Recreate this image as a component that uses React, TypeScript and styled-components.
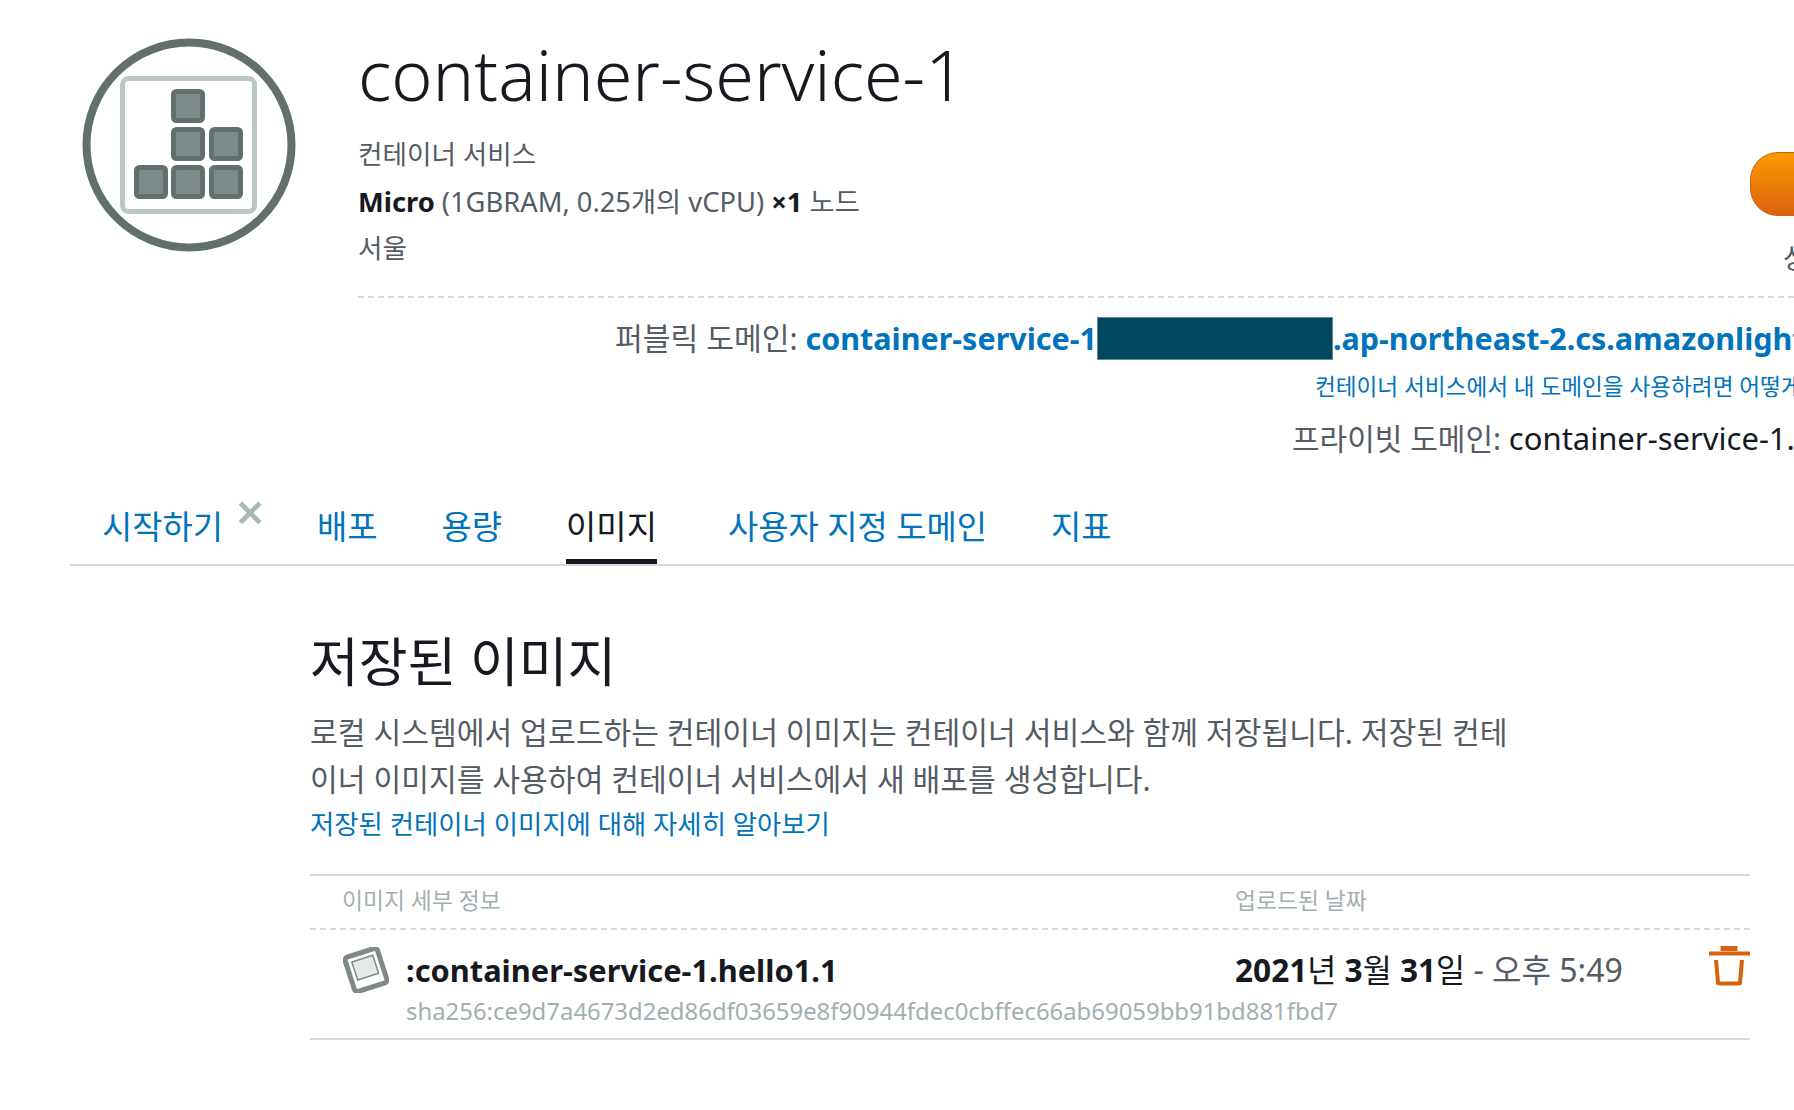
import styled, {createGlobalStyle} from 'styled-components';

const GlobalStyle = createGlobalStyle`
  html, body {
    margin: 0;
    padding: 0;
    background: #fff;
  }
  body {
    font-family: "Noto Sans", "Noto Sans CJK KR", sans-serif;
    color: #16191f;
  }
`;

const tabs = ['배포', '용량', '이미지', '사용자 지정 도메인', '지표'];

const ServiceIcon = () => {
  const blocks = [[88, 50], [88, 88], [126, 88], [51, 126], [88, 126], [126, 126]];
  return (
    <svg width="214" height="214" viewBox="0 0 214 214" style={{overflow: 'visible'}}>
      <circle cx="106" cy="106" r="102.5" fill="#fff" stroke="#616f6e" strokeWidth="8" />
      <rect x="39.5" y="39.5" width="132" height="133" rx="6" fill="#fff" stroke="#bcc6c4" strokeWidth="5" />
      {blocks.map(([x, y]) => (
        <rect key={`${x}-${y}`} x={x + 2.5} y={y + 2.5} width="29" height="29" rx="3" fill="#7d8a89" stroke="#616f6e" strokeWidth="5" />
      ))}
    </svg>
  );
};

const ImageIcon = () => (
  <svg width="46" height="46" viewBox="0 0 46 46">
    <g transform="rotate(-18 23 23)">
      <rect x="6" y="5" width="34" height="36" rx="3" fill="#fff" stroke="#7d8a89" strokeWidth="5" />
      <rect x="12" y="11" width="22" height="19" fill="#e4e8e8" stroke="#7d8a89" strokeWidth="1.5" />
    </g>
  </svg>
);

const TrashIcon = () => (
  <svg width="41" height="40" viewBox="0 0 41 40" fill="none" stroke="#d9620f" strokeWidth="4">
    <path d="M0 7.5h41" />
    <path d="M13 5V1.5h14V5" fill="#d9620f" strokeWidth="3" />
    <path d="M7 14l2 22.5a1 1 0 0 0 1 1h20a1 1 0 0 0 1-1l2-22.5" />
  </svg>
);

export default function App() {
  return (
    <Page>
      <GlobalStyle />
      <Header>
        <IconSlot><ServiceIcon /></IconSlot>
        <Summary>
          <Title>container-service-1</Title>
          <Meta>컨테이너 서비스</Meta>
          <Meta $spec><strong>Micro</strong> (1GBRAM, 0.25개의 vCPU) <strong>×1</strong> 노드</Meta>
          <Meta>서울</Meta>
          <StartButton />
          <StatusText>상태</StatusText>
          <Domains>
            <PublicDomain>
              퍼블릭 도메인: <b>container-service-1</b><Redacted /><b>.ap-northeast-2.cs.amazonlightsail.com</b>
            </PublicDomain>
            <HelpLink>컨테이너 서비스에서 내 도메인을 사용하려면 어떻게 해야 합니까?</HelpLink>
            <PrivateDomain>프라이빗 도메인: <span>container-service-1.service.local</span></PrivateDomain>
          </Domains>
        </Summary>
      </Header>

      <TabBar>
        <Tab>시작하기</Tab>
        <CloseMark>✕</CloseMark>
        {tabs.map(tab => (
          <Tab key={tab} $active={tab === '이미지'}>{tab}</Tab>
        ))}
      </TabBar>

      <Section>
        <Heading>저장된 이미지</Heading>
        <Description>
          로컬 시스템에서 업로드하는 컨테이너 이미지는 컨테이너 서비스와 함께 저장됩니다. 저장된 컨테이너 이미지를 사용하여 컨테이너 서비스에서 새 배포를 생성합니다.
        </Description>
        <LearnMore>저장된 컨테이너 이미지에 대해 자세히 알아보기</LearnMore>

        <Table>
          <TableHead>
            <span>이미지 세부 정보</span>
            <span>업로드된 날짜</span>
          </TableHead>
          <TableRow>
            <RowIcon><ImageIcon /></RowIcon>
            <ImageInfo>
              <ImageName>:container-service-1.hello1.1</ImageName>
              <ImageHash>sha256:ce9d7a4673d2ed86df03659e8f90944fdec0cbffec66ab69059bb91bd881fbd7</ImageHash>
            </ImageInfo>
            <UploadDate><strong>2021</strong>년 <strong>3</strong>월 <strong>31</strong>일<em> - 오후 5:49</em></UploadDate>
            <DeleteSlot><TrashIcon /></DeleteSlot>
          </TableRow>
        </Table>
      </Section>
    </Page>
  );
}

const Page = styled.div`
  width: 1794px;
  height: 1110px;
  overflow: hidden;
  position: relative;
`;

const Header = styled.div`
  display: flex;
  padding: 39px 0 0 83px;
  height: 481px;
  box-sizing: border-box;
`;

const IconSlot = styled.div`
  width: 275px;
  flex: none;
`;

const Summary = styled.div`
  flex: 1;
  min-width: 0;
  position: relative;
`;

const Title = styled.h1`
  margin: 0 0 22px;
  font-size: 70px;
  line-height: 70px;
  font-weight: 300;
  color: #16191f;
  white-space: nowrap;
`;

const Meta = styled.div<{$spec?: boolean}>`
  font-size: ${p => (p.$spec ? '27.3px' : '26.6px')};
  line-height: 47px;
  color: #545b64;
  white-space: nowrap;

  strong {
    color: #16191f;
    font-weight: 700;
  }
`;

const StartButton = styled.div`
  position: absolute;
  left: 1392px;
  top: 113px;
  width: 200px;
  height: 64px;
  box-sizing: border-box;
  border-radius: 28px;
  border: 1px solid #c7620f;
  background: linear-gradient(#ff9900, #d9620f);
`;

const StatusText = styled.div`
  position: absolute;
  left: 1425px;
  top: 198px;
  font-size: 28px;
  color: #545b64;
  white-space: nowrap;
`;

const Domains = styled.div`
  margin-top: 24px;
  border-top: 2px dashed #d5dbdb;
  white-space: nowrap;
`;

const PublicDomain = styled.div`
  padding-left: 257px;
  margin-top: 19px;
  display: flex;
  align-items: center;
  font-size: 30.2px;
  line-height: 43px;
  color: #545b64;
  white-space: pre;

  b {
    font-size: 30.5px;
    font-weight: 700;
    color: #0073bb;
  }
`;

const Redacted = styled.span`
  display: inline-block;
  width: 236px;
  height: 43px;
  box-sizing: border-box;
  border: 1px solid #5b8a9b;
  background: #01475e;
  flex: none;
`;

const HelpLink = styled.div`
  padding-left: 957px;
  margin-top: 11px;
  font-size: 22.6px;
  line-height: 32px;
  color: #0073bb;
`;

const PrivateDomain = styled.div`
  padding-left: 934px;
  margin-top: 13px;
  font-size: 30px;
  line-height: 44px;
  color: #545b64;

  span {
    font-size: 31px;
    color: #16191f;
  }
`;

const TabBar = styled.div`
  display: flex;
  align-items: flex-start;
  margin-left: 70px;
  padding-left: 32px;
  height: 85px;
  box-sizing: border-box;
  border-bottom: 2px solid #d5dbdb;
`;

const Tab = styled.div<{$active?: boolean}>`
  height: 83px;
  box-sizing: border-box;
  margin-right: ${p => (p.$active ? '71px' : '64px')};
  padding-top: 23px;
  font-size: 32.9px;
  line-height: 46px;
  color: ${p => (p.$active ? '#16191f' : '#0073bb')};
  border-bottom: 5px solid ${p => (p.$active ? '#16191f' : 'transparent')};
  white-space: nowrap;
`;

const CloseMark = styled.span`
  margin: 12px 52px 0 -52px;
  font-size: 36px;
  line-height: 40px;
  font-weight: 700;
  color: #aab7b8;
`;

const Section = styled.div`
  margin-left: 310px;
  width: 1440px;
`;

const Heading = styled.h2`
  margin: 61px 0 0;
  font-size: 53px;
  line-height: 70px;
  font-weight: 400;
  color: #16191f;
`;

const Description = styled.p`
  margin: 12px 0 0;
  width: 1210px;
  font-size: 30.2px;
  line-height: 47px;
  color: #545b64;
  word-break: break-all;
`;

const LearnMore = styled.div`
  font-size: 26.4px;
  line-height: 38px;
  color: #0073bb;
  margin-top: 2px;
`;

const Table = styled.div`
  margin-top: 31px;
  border-top: 2px solid #d5dbdb;
  border-bottom: 2px solid #d5dbdb;
`;

const TableHead = styled.div`
  display: grid;
  grid-template-columns: 893px 1fr;
  padding: 0 0 6px 32px;
  height: 54px;
  align-items: center;
  box-sizing: border-box;
  border-bottom: 2px dashed #d5dbdb;
  font-size: 22.8px;
  color: #a2afaf;
`;

const TableRow = styled.div`
  display: grid;
  grid-template-columns: 96px 829px 1fr auto;
  height: 108px;
`;

const RowIcon = styled.div`
  padding: 17px 0 0 33px;
`;

const ImageInfo = styled.div`
  padding-top: 19px;
`;

const ImageName = styled.div`
  font-size: 30.8px;
  line-height: 42px;
  font-weight: 700;
  color: #16191f;
  white-space: nowrap;
  margin-bottom: 2px;
`;

const ImageHash = styled.div`
  font-size: 23.9px;
  line-height: 36px;
  color: #a2afaf;
  white-space: nowrap;
`;

const UploadDate = styled.div`
  padding-top: 19px;
  font-size: 31.6px;
  line-height: 42px;
  color: #16191f;
  white-space: nowrap;

  em {
    font-size: 32px;
    font-style: normal;
    color: #545b64;
  }
`;

const DeleteSlot = styled.div`
  padding-top: 16px;
`;
